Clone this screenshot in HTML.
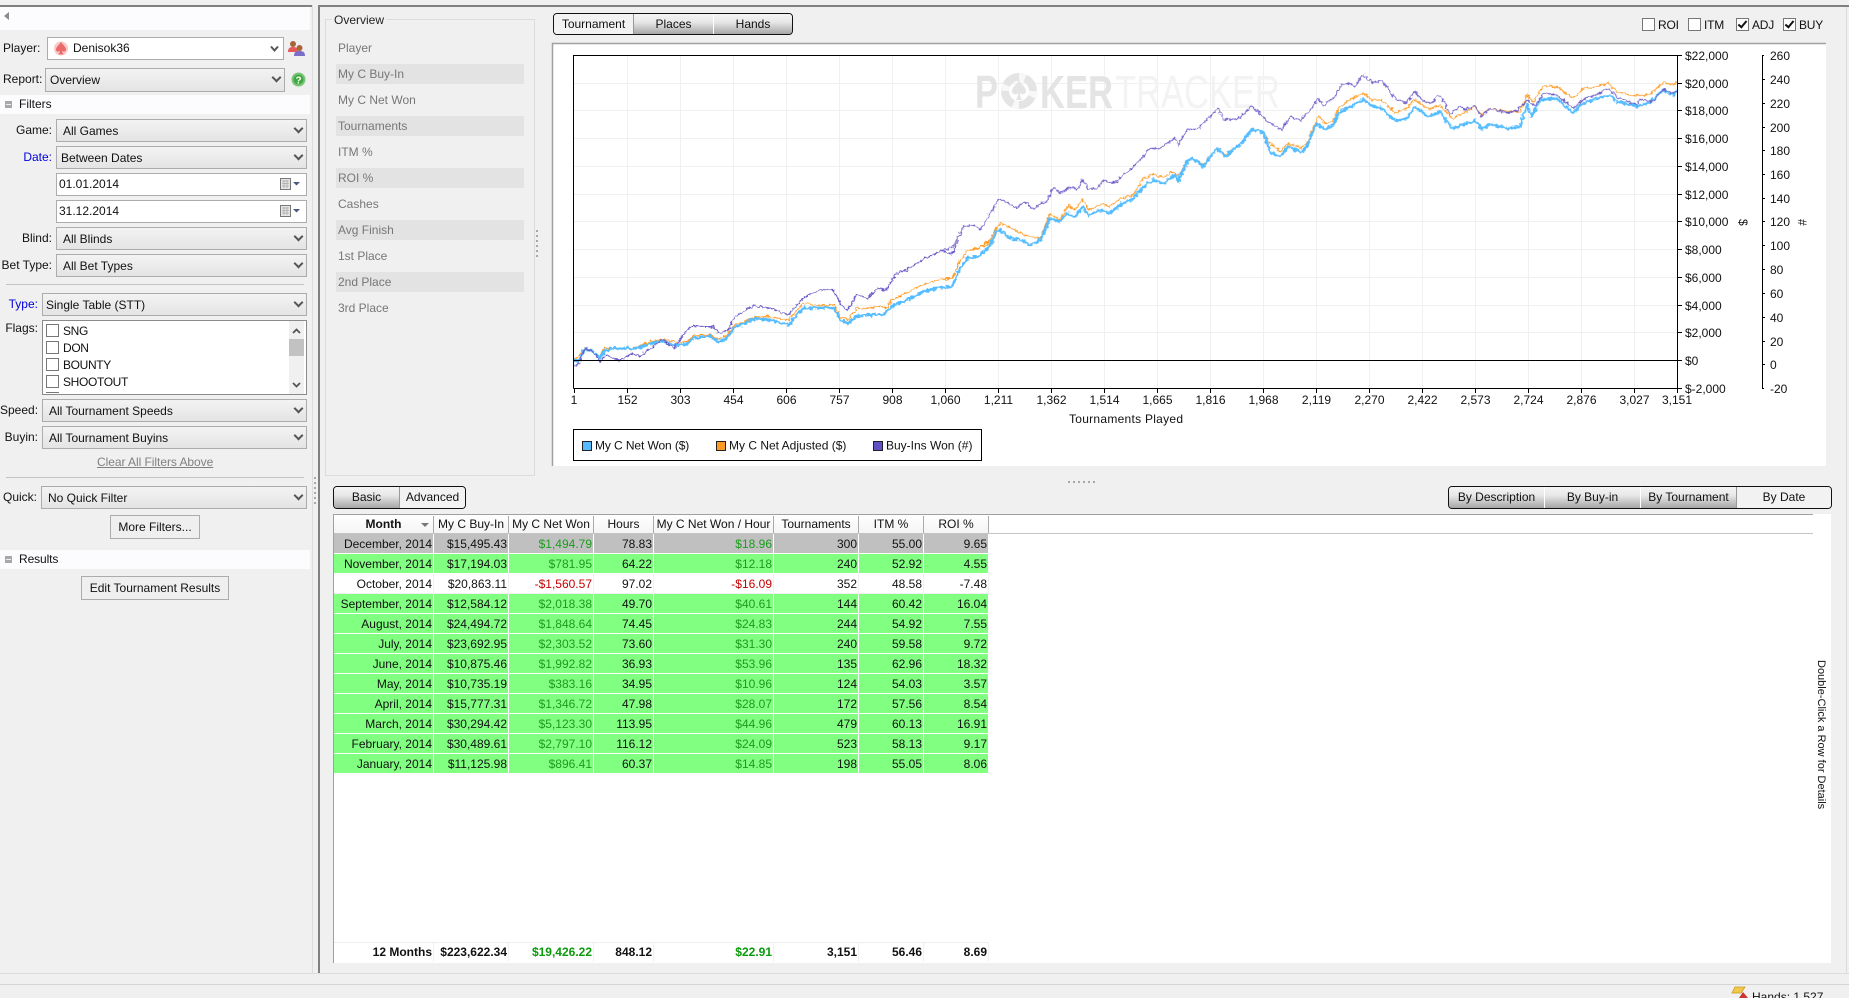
<!DOCTYPE html>
<html><head><meta charset="utf-8"><title>PokerTracker</title>
<style>
html,body{margin:0;padding:0;width:1849px;height:998px;overflow:hidden;background:#f0f0f0}
body{font:12px/16px "Liberation Sans",sans-serif;color:#111;position:relative}
.a{position:absolute;white-space:nowrap}
.l{position:absolute;text-align:right;white-space:nowrap;line-height:16px}
.c{position:absolute;left:56px;width:249px;height:21px;border:1px solid #acacac;background:linear-gradient(#f3f3f3,#e4e4e4);line-height:22px;padding-left:0;box-sizing:content-box}
.c span{margin-left:6px}
.c:after{content:"";position:absolute;right:4px;top:5px;width:5px;height:5px;border-right:2px solid #555;border-bottom:2px solid #555;transform:rotate(45deg)}
.d{position:absolute;left:56px;width:249px;height:21px;border:1px solid #acacac;background:#fff;line-height:21px}
.d span{margin-left:2px}
.b{position:absolute;border:1px solid #acacac;background:#efefef;text-align:center;box-sizing:border-box}
.band{position:absolute;left:0;width:310px;background:#fcfcfe}
.mn{position:absolute;left:5px;width:7px;height:7px;background:#a8a8a8;border:0}
.mn:after{content:"";position:absolute;left:1px;top:3px;width:5px;height:1px;background:#eee}
.cb{position:absolute;width:11px;height:11px;border:1px solid #777;background:#fff}
.ck{position:absolute;width:11px;height:11px;border:1px solid #777;background:#fff}
.ck:after{content:"";position:absolute;left:3px;top:0;width:3px;height:7px;border-right:2px solid #111;border-bottom:2px solid #111;transform:rotate(40deg)}
.ov{position:absolute;left:336px;width:188px;height:20px;line-height:20px;color:#777}
.ov span{margin-left:2px}
.ovg{background:#e3e3e3}
.tabs{position:absolute;height:22px;border:1px solid #111;border-radius:4px;box-sizing:border-box;overflow:hidden;display:flex;background:#f0f0f0}
.tabs div{text-align:center;line-height:21px;box-sizing:border-box}
.g{background:linear-gradient(#f4f4f4,#e8e8e8 40%,#a6a6a6);border-right:1px solid #fff}
.f{background:#f2f2f2;border-right:1px solid #bbb}
table{position:absolute;left:334px;border-collapse:separate;border-spacing:0;table-layout:fixed}
td{height:18px;padding:1px 1px 0 0;text-align:right;border-right:1px solid #fff;border-bottom:1px solid #fff;line-height:18px;overflow:hidden;white-space:nowrap;box-sizing:content-box}
tr.gr td{background:#80ff80}
tr.se td{background:#c0c0c0}
tr.wh td{background:#fff;border-color:#f0f0f0}
.p{color:#1c9c1c}
.n{color:#c40000}
.hd{position:absolute;top:516px;height:17px;line-height:17px;text-align:center;border-right:1px solid #aaa;box-sizing:border-box}
.sm{position:absolute;top:942px;height:20px;line-height:18px;text-align:right;font-weight:bold;padding-right:1px;box-sizing:border-box;border-right:1px solid #f0f0f0;border-top:1px solid #eee}
svg text{font-family:"Liberation Sans",sans-serif;font-size:12px;fill:#111}
.dot{position:absolute;width:2px;height:2px;background:#a8a8a8}
.fl{letter-spacing:-.35px}
</style></head><body>

<!-- frame lines -->
<div class="a" style="left:0;top:5px;width:312px;height:2px;background:#808080"></div>
<div class="a" style="left:312px;top:5px;width:1px;height:968px;background:#dcdcdc"></div>
<div class="a" style="left:318px;top:6px;width:2px;height:967px;background:#808080"></div>
<div class="a" style="left:318px;top:5px;width:1531px;height:2px;background:#808080"></div>
<div class="a" style="left:1846px;top:7px;width:1px;height:966px;background:#dcdcdc"></div>
<div class="a" style="left:0;top:973px;width:1849px;height:1px;background:#dcdcdc"></div>
<div class="a" style="left:0;top:984px;width:1849px;height:1px;background:#d4d4d4"></div>

<!-- LEFT PANEL -->
<div class="band" style="top:7px;height:23px"></div>
<svg class="a" style="left:4px;top:12px" width="6" height="9"><path d="M5 0V8L0 4Z" fill="#8a8a8a"/></svg>

<div class="l" style="left:3px;top:40px">Player:</div>
<div class="d" style="left:47px;top:37px;width:235px;height:21px"><span style="margin-left:25px">Denisok36</span></div>
<svg class="a" style="left:54px;top:41px" width="14" height="15"><circle cx="7" cy="7.5" r="7" fill="#f7c9c9"/><path d="M7 1C9 4 12 6 12 8.6 12 10.6 9.5 11.2 8 9.8 8.2 11.5 8.8 12.5 9.8 13.4H4.2C5.2 12.5 5.8 11.5 6 9.8 4.5 11.2 2 10.6 2 8.6 2 6 5 4 7 1Z" fill="#ea6a6a"/></svg>
<svg class="a" style="left:270px;top:45px" width="10" height="8"><path d="M1 1.5 4.5 5.5 8 1.5" fill="none" stroke="#555" stroke-width="2"/></svg>
<svg class="a" style="left:287px;top:40px" width="19" height="17"><circle cx="6" cy="4" r="3" fill="#a8653a"/><path d="M1 12C1 8 3 7 6 7S11 8 11 12Z" fill="#e85a5a"/><circle cx="12.5" cy="8" r="3" fill="#a8653a"/><path d="M7 16C7 12 9 11 12.5 11S18 12 18 16Z" fill="#7a70c8"/></svg>

<div class="l" style="left:3px;top:71px">Report:</div>
<div class="c" style="left:45px;top:68px;width:238px;height:22px;line-height:23px"><span style="margin-left:4px">Overview</span></div>
<svg class="a" style="left:291px;top:72px" width="15" height="15"><circle cx="7.500" cy="7.500" r="7" fill="#7bc47b"/><circle cx="7.500" cy="7.500" r="5" fill="#3fa83f"/><text x="4.500" y="11.500" style="font-size:10px;font-weight:bold;fill:#fff">?</text></svg>

<div class="band" style="top:95px;height:19px"></div>
<div class="mn" style="top:101px"></div>
<div class="a" style="left:19px;top:96px">Filters</div>

<div class="l" style="left:0;width:52px;top:122px">Game:</div>
<div class="c" style="top:119px"><span>All Games</span></div>
<div class="l" style="left:0;width:52px;top:149px;color:#0000e0">Date:</div>
<div class="c" style="top:146px"><span style="margin-left:4px">Between Dates</span></div>
<div class="d" style="top:173px"><span>01.01.2014</span></div>
<svg class="a" style="left:280px;top:178px" width="22" height="13"><rect x=".5" y=".5" width="10" height="11" fill="#e6e6e6" stroke="#777"/><path d="M2 3H9M2 5.500H9M2 8H9M4 2V10M7 2V10" stroke="#aaa" stroke-width=".8"/><path d="M13 4H20L16.500 7.500Z" fill="#4a5a80"/></svg>
<div class="d" style="top:200px"><span>31.12.2014</span></div>
<svg class="a" style="left:280px;top:205px" width="22" height="13"><rect x=".5" y=".5" width="10" height="11" fill="#e6e6e6" stroke="#777"/><path d="M2 3H9M2 5.500H9M2 8H9M4 2V10M7 2V10" stroke="#aaa" stroke-width=".8"/><path d="M13 4H20L16.500 7.500Z" fill="#4a5a80"/></svg>
<div class="l" style="left:0;width:52px;top:230px">Blind:</div>
<div class="c" style="top:227px"><span>All Blinds</span></div>
<div class="l" style="left:0;width:52px;top:257px">Bet Type:</div>
<div class="c" style="top:254px"><span>All Bet Types</span></div>
<div class="a" style="left:6px;top:284px;width:298px;height:1px;background:#c4c4c4"></div>

<div class="l" style="left:0;width:38px;top:296px;color:#0000e0">Type:</div>
<div class="c" style="left:42px;top:293px;width:263px"><span style="margin-left:3px">Single Table (STT)</span></div>
<div class="l" style="left:0;width:38px;top:320px">Flags:</div>
<div class="a" style="left:42px;top:320px;width:263px;height:73px;border:1px solid #8a8a8a;background:#fff;overflow:hidden"></div>
<div class="cb" style="left:46px;top:324px"></div><div class="a fl" style="left:63px;top:323px">SNG</div>
<div class="cb" style="left:46px;top:341px"></div><div class="a fl" style="left:63px;top:340px">DON</div>
<div class="cb" style="left:46px;top:358px"></div><div class="a fl" style="left:63px;top:357px">BOUNTY</div>
<div class="cb" style="left:46px;top:375px"></div><div class="a fl" style="left:63px;top:374px">SHOOTOUT</div>
<div class="a" style="left:46px;top:392px;width:13px;height:1px;background:#777"></div>
<div class="a" style="left:289px;top:321px;width:15px;height:73px;background:#f0f0f0"></div>
<div class="a" style="left:289px;top:339px;width:15px;height:17px;background:#c2c2c2"></div>
<svg class="a" style="left:292px;top:328px" width="9" height="6"><path d="M1 5 4.500 1.500 8 5" fill="none" stroke="#555" stroke-width="1.800"/></svg>
<svg class="a" style="left:292px;top:382px" width="9" height="6"><path d="M1 1 4.500 4.500 8 1" fill="none" stroke="#555" stroke-width="1.800"/></svg>

<div class="l" style="left:0;width:38px;top:402px">Speed:</div>
<div class="c" style="left:42px;top:399px;width:263px"><span>All Tournament Speeds</span></div>
<div class="l" style="left:0;width:38px;top:429px">Buyin:</div>
<div class="c" style="left:42px;top:426px;width:263px"><span>All Tournament Buyins</span></div>
<div class="a" style="left:97px;top:454px;color:#808080;text-decoration:underline;letter-spacing:-.05px">Clear All Filters Above</div>
<div class="a" style="left:6px;top:477px;width:298px;height:1px;background:#c4c4c4"></div>
<div class="l" style="left:0;width:37px;top:489px">Quick:</div>
<div class="c" style="left:41px;top:486px;width:264px"><span>No Quick Filter</span></div>
<div class="b" style="left:110px;top:515px;width:90px;height:24px;line-height:22px">More Filters...</div>
<div class="band" style="top:550px;height:19px"></div>
<div class="mn" style="top:556px"></div>
<div class="a" style="left:19px;top:551px;letter-spacing:-.1px">Results</div>
<div class="b" style="left:81px;top:576px;width:148px;height:24px;line-height:22px">Edit Tournament Results</div>

<!-- splitter dots -->
<div class="dot" style="left:314px;top:477px"></div><div class="dot" style="left:314px;top:482px"></div><div class="dot" style="left:314px;top:487px"></div><div class="dot" style="left:314px;top:492px"></div><div class="dot" style="left:314px;top:497px"></div><div class="dot" style="left:314px;top:502px"></div>
<div class="dot" style="left:536px;top:230px"></div><div class="dot" style="left:536px;top:235px"></div><div class="dot" style="left:536px;top:240px"></div><div class="dot" style="left:536px;top:245px"></div><div class="dot" style="left:536px;top:250px"></div><div class="dot" style="left:536px;top:255px"></div>
<div class="dot" style="left:1068px;top:481px"></div><div class="dot" style="left:1073px;top:481px"></div><div class="dot" style="left:1078px;top:481px"></div><div class="dot" style="left:1083px;top:481px"></div><div class="dot" style="left:1088px;top:481px"></div><div class="dot" style="left:1093px;top:481px"></div>

<!-- OVERVIEW -->
<div class="a" style="left:325px;top:19px;width:208px;height:455px;border:1px solid #dcdcdc"></div>
<div class="a" style="left:332px;top:12px;padding:0 2px;background:#f0f0f0;color:#222">Overview</div>
<div class="ov" style="top:38px"><span>Player</span></div>
<div class="ov ovg" style="top:64px"><span>My C Buy-In</span></div>
<div class="ov" style="top:90px"><span>My C Net Won</span></div>
<div class="ov ovg" style="top:116px"><span>Tournaments</span></div>
<div class="ov" style="top:142px"><span>ITM %</span></div>
<div class="ov ovg" style="top:168px"><span>ROI %</span></div>
<div class="ov" style="top:194px"><span>Cashes</span></div>
<div class="ov ovg" style="top:220px"><span>Avg Finish</span></div>
<div class="ov" style="top:246px"><span>1st Place</span></div>
<div class="ov ovg" style="top:272px"><span>2nd Place</span></div>
<div class="ov" style="top:298px"><span>3rd Place</span></div>

<!-- TOP TABS -->
<div class="tabs" style="left:553px;top:13px;width:240px">
<div class="f" style="width:80px;border-right:1px solid #999">Tournament</div><div class="g" style="width:80px">Places</div><div class="g" style="width:78px;border-right:0">Hands</div></div>

<!-- CHECKBOXES -->
<div class="cb" style="left:1642px;top:18px"></div><div class="a" style="left:1658px;top:17px;letter-spacing:-.2px">ROI</div>
<div class="cb" style="left:1688px;top:18px"></div><div class="a" style="left:1704px;top:17px;letter-spacing:-.2px">ITM</div>
<div class="ck" style="left:1736px;top:18px"></div><div class="a" style="left:1752px;top:17px;letter-spacing:-.2px">ADJ</div>
<div class="ck" style="left:1783px;top:18px"></div><div class="a" style="left:1799px;top:17px;letter-spacing:-.2px">BUY</div>

<!-- CHART -->
<svg class="a" style="left:0;top:0" width="1849" height="480" viewBox="0 0 1849 480">
<defs><filter id="j" filterUnits="userSpaceOnUse" x="560" y="40" width="1130" height="345" color-interpolation-filters="sRGB"><feTurbulence type="fractalNoise" baseFrequency="0.3" numOctaves="2" seed="4" result="t"/><feDisplacementMap in="SourceGraphic" in2="t" scale="5" xChannelSelector="R" yChannelSelector="G"/></filter></defs>
<rect x="552.500" y="43" width="1273.500" height="423" fill="#fff"/>
<path d="M552.500 466V43.500H1826" fill="none" stroke="#a0a0a0" stroke-width="1.500"/>
<!-- grid -->
<path d="M574 83.500H1677M574 110.500H1677M574 138.500H1677M574 166.500H1677M574 194.500H1677M574 221.500H1677M574 249.500H1677M574 277.500H1677M574 305.500H1677M574 332.500H1677" stroke="#f0f0f0" fill="none"/>
<path d="M627.500 56V388M680.500 56V388M733.500 56V388M786.500 56V388M839.500 56V388M892.500 56V388M945.500 56V388M998.500 56V388M1051.500 56V388M1104.500 56V388M1157.500 56V388M1210.500 56V388M1263.500 56V388M1316.500 56V388M1369.500 56V388M1422.500 56V388M1475.500 56V388M1528.500 56V388M1581.500 56V388M1634.500 56V388" stroke="#f0f0f0" fill="none"/>
<!-- watermark -->
<g>
<text x="975" y="108" textLength="23" lengthAdjust="spacingAndGlyphs" style="font-size:46px;font-weight:bold;fill:#e4e4e4">P</text>
<circle cx="1019" cy="91" r="14" fill="none" stroke="#e4e4e4" stroke-width="8"/>
<circle cx="1019" cy="91" r="14" fill="none" stroke="#f8f8f8" stroke-width="8" stroke-dasharray="6 16"/>
<path d="M1019 80C1021 84 1026 87 1026 91 1026 95 1021 95 1020 93 1020 96 1021 98 1022 100H1016C1017 98 1018 96 1018 93 1017 95 1012 95 1012 91 1012 87 1017 84 1019 80Z" fill="#e4e4e4"/>
<text x="1040" y="108" textLength="73" lengthAdjust="spacingAndGlyphs" style="font-size:46px;font-weight:bold;fill:#e4e4e4">KER</text>
<text x="1115" y="108" textLength="165" lengthAdjust="spacingAndGlyphs" style="font-size:46px;fill:#f3f3f3">TRACKER</text>
</g>
<!-- series -->
<g filter="url(#j)" fill="none" stroke-linejoin="round">
<g stroke="#ff9a22" stroke-width="1.200">
<g transform="translate(550,240) scale(.41459,.33333)"><polyline vector-effect="non-scaling-stroke" points="60,362 85,322 120,350 130,325 210,322 240,305 270,298 300,305 330,305 345,287 385,283 405,298 425,288 445,255 470,243 495,230 530,230 575,240 610,190 660,197 685,195 700,230 718,238 740,205 765,205 790,198 810,205 825,180 860,158 900,133 940,118 970,115 990,60 1005,35 1035,25 1060,0"/></g>
<g transform="translate(800,50) scale(.33333)"><polyline vector-effect="non-scaling-stroke" points="520,597 560,585 600,520 630,530 660,550 690,560 720,565 750,492 780,510 805,465 825,480 848,447 865,480 905,462 930,470 960,445 1000,435 1030,385 1060,372 1090,385 1115,365 1135,378 1160,335 1180,325 1210,345 1250,295 1280,315 1300,295 1320,285 1355,240 1390,245 1405,275 1440,305 1465,280 1500,292"/></g>
<g transform="translate(1300,50) scale(.33333)"><polyline vector-effect="non-scaling-stroke" points="0,295 20,280 55,198 75,222 100,210 115,175 150,150 190,128 215,150 245,150 285,188 320,175 345,148 385,178 420,165 455,205 495,188 525,168 545,195 570,175 625,185 660,185 682,132 700,155 730,108 770,110 820,145 850,115 885,112 925,100 950,125 1010,138 1050,132 1090,97 1120,105 1130,98"/></g>
</g>
<g stroke="#55bdff" stroke-width="2.600">
<g transform="translate(550,240) scale(.41459,.33333)"><polyline vector-effect="non-scaling-stroke" points="57,360 70,362 85,325 105,335 120,355 130,335 150,325 210,325 240,312 270,303 300,315 330,312 345,295 385,288 405,305 425,298 445,262 470,250 495,235 530,240 575,255 610,205 660,203 685,205 700,240 718,250 740,228 765,225 805,222 830,195 860,180 900,155 940,143 970,140 990,85 1005,55 1035,48 1060,20 1070,0"/></g>
<g transform="translate(800,50) scale(.33333)"><polyline vector-effect="non-scaling-stroke" points="560,600 590,545 600,540 630,565 660,568 690,585 720,572 750,505 780,515 800,490 825,500 848,470 865,495 905,480 930,490 960,465 1000,445 1030,410 1060,390 1090,400 1125,375 1135,395 1160,335 1180,325 1210,350 1250,295 1280,320 1300,295 1320,285 1355,240 1390,245 1410,305 1440,320 1465,290 1500,305"/></g>
<g transform="translate(1300,50) scale(.33333)"><polyline vector-effect="non-scaling-stroke" points="0,310 20,290 50,220 75,238 100,225 115,190 150,170 190,148 215,168 245,175 285,212 320,205 345,170 385,200 420,185 455,235 495,222 525,212 545,237 570,222 625,235 660,230 680,165 695,200 720,150 770,145 820,190 840,165 880,148 930,135 950,155 1010,168 1050,158 1090,120 1120,135 1130,120"/></g>
</g>
<g stroke="#6a5cc8" stroke-width="1.200">
<g transform="translate(550,240) scale(.41459,.33333)"><polyline vector-effect="non-scaling-stroke" points="57,375 65,380 85,325 105,335 120,365 135,345 165,362 200,340 215,350 270,300 300,325 315,295 340,258 395,260 405,280 430,272 445,230 490,198 535,205 575,225 610,175 650,150 685,150 700,190 718,212 740,162 765,175 790,145 810,150 835,100 860,90 900,58 945,32 970,42 985,0"/></g>
<g transform="translate(800,50) scale(.33333)"><polyline vector-effect="non-scaling-stroke" points="430,600 460,590 490,530 520,525 540,540 598,447 650,472 675,455 695,475 740,455 760,412 780,430 815,410 830,420 850,388 865,415 890,418 910,392 945,400 970,372 985,365 1030,320 1050,295 1080,295 1125,265 1135,285 1160,240 1195,235 1225,205 1255,175 1270,210 1305,205 1310,210 1355,168 1400,212 1445,240 1470,200 1500,210"/></g>
<g transform="translate(1300,50) scale(.33333)"><polyline vector-effect="non-scaling-stroke" points="0,212 35,175 55,145 70,168 105,140 125,105 150,100 165,108 190,75 215,98 245,92 285,145 320,160 345,122 370,155 395,160 415,135 430,150 450,195 480,168 495,180 525,168 545,200 570,175 625,190 650,182 682,150 705,168 730,130 770,135 820,175 855,145 885,135 925,115 950,140 1010,165 1020,148 1060,155 1090,118 1120,130 1130,122"/></g>
</g>
</g>
<!-- axes -->
<path d="M573.500 388.500V55.500H1677.500V388.500H573.500M573.500 360.500H1677.500" fill="none" stroke="#000"/>
<path d="M1678 55.500H1682M1678 83.500H1682M1678 110.500H1682M1678 138.500H1682M1678 166.500H1682M1678 194.500H1682M1678 221.500H1682M1678 249.500H1682M1678 277.500H1682M1678 305.500H1682M1678 332.500H1682M1678 360.500H1682M1678 388.500H1682" stroke="#000" fill="none"/>
<path d="M1764 55.500H1762.500V388.500H1764M1762.500 79.500H1765M1762.500 103.500H1765M1762.500 127.500H1765M1762.500 150.500H1765M1762.500 174.500H1765M1762.500 198.500H1765M1762.500 221.500H1765M1762.500 245.500H1765M1762.500 269.500H1765M1762.500 293.500H1765M1762.500 317.500H1765M1762.500 341.500H1765M1762.500 364.500H1765" stroke="#000" fill="none"/>
<path d="M574.500 388V393M627.500 388V393M680.500 388V393M733.500 388V393M786.500 388V393M839.500 388V393M892.500 388V393M945.500 388V393M998.500 388V393M1051.500 388V393M1104.500 388V393M1157.500 388V393M1210.500 388V393M1263.500 388V393M1316.500 388V393M1369.500 388V393M1422.500 388V393M1475.500 388V393M1528.500 388V393M1581.500 388V393M1634.500 388V393M1677.500 388V393" stroke="#000" fill="none"/>
<g>
<text x="1685" y="60">$22,000</text><text x="1685" y="88">$20,000</text><text x="1685" y="115">$18,000</text><text x="1685" y="143">$16,000</text><text x="1685" y="171">$14,000</text><text x="1685" y="199">$12,000</text><text x="1685" y="226">$10,000</text><text x="1685" y="254">$8,000</text><text x="1685" y="282">$6,000</text><text x="1685" y="310">$4,000</text><text x="1685" y="337">$2,000</text><text x="1685" y="365">$0</text><text x="1685" y="393">$-2,000</text>
<text x="1770" y="60">260</text><text x="1770" y="84">240</text><text x="1770" y="108">220</text><text x="1770" y="132">200</text><text x="1770" y="155">180</text><text x="1770" y="179">160</text><text x="1770" y="203">140</text><text x="1770" y="226">120</text><text x="1770" y="250">100</text><text x="1770" y="274">80</text><text x="1770" y="298">60</text><text x="1770" y="322">40</text><text x="1770" y="346">20</text><text x="1770" y="369">0</text><text x="1770" y="393">-20</text>
<text transform="translate(1739,222) rotate(90)" x="-3">$</text>
<text transform="translate(1798,222) rotate(90)" x="-3">#</text>
</g>
<g text-anchor="middle">
<text x="574" y="404">1</text><text x="627.500" y="404">152</text><text x="680.500" y="404">303</text><text x="733.500" y="404">454</text><text x="786.500" y="404">606</text><text x="839.500" y="404">757</text><text x="892.500" y="404">908</text><text x="945.500" y="404">1,060</text><text x="998.500" y="404">1,211</text><text x="1051.500" y="404">1,362</text><text x="1104.500" y="404">1,514</text><text x="1157.500" y="404">1,665</text><text x="1210.500" y="404">1,816</text><text x="1263.500" y="404">1,968</text><text x="1316.500" y="404">2,119</text><text x="1369.500" y="404">2,270</text><text x="1422.500" y="404">2,422</text><text x="1475.500" y="404">2,573</text><text x="1528.500" y="404">2,724</text><text x="1581.500" y="404">2,876</text><text x="1634.500" y="404">3,027</text><text x="1677" y="404">3,151</text>
<text x="1126" y="423" textLength="114" lengthAdjust="spacing">Tournaments Played</text>
</g>
<!-- legend -->
<rect x="573.500" y="429.500" width="408" height="31" fill="#fff" stroke="#000"/>
<rect x="582.500" y="441.500" width="9" height="9" fill="#55bdff" stroke="#222"/><text x="595" y="449.500" style="letter-spacing:-.1px">My C Net Won ($)</text>
<rect x="716.500" y="441.500" width="9" height="9" fill="#ff9a22" stroke="#222"/><text x="729" y="449.500">My C Net Adjusted ($)</text>
<rect x="873.500" y="441.500" width="9" height="9" fill="#5f52c4" stroke="#222"/><text x="886" y="449.500">Buy-Ins Won (#)</text>
</svg>

<!-- LOWER TABS -->
<div class="tabs" style="left:333px;top:486px;width:133px;height:23px">
<div class="g" style="width:66px;border-right:1px solid #999">Basic</div><div class="f" style="width:65px;border-right:0">Advanced</div></div>
<div class="tabs" style="left:1448px;top:486px;width:384px;height:23px">
<div class="g" style="width:96px">By Description</div><div class="g" style="width:96px">By Buy-in</div><div class="g" style="width:96px;border-right:1px solid #999">By Tournament</div><div class="f" style="width:94px;border-right:0">By Date</div></div>

<!-- TABLE PANEL -->
<div class="a" style="left:333px;top:514px;width:1498px;height:449px;background:#fff"></div>
<div class="a" style="left:333px;top:514px;width:1480px;height:1px;background:#a0a0a0"></div>
<div class="a" style="left:333px;top:514px;width:1px;height:449px;background:#a0a0a0"></div>
<div class="a" style="left:334px;top:533px;width:1479px;height:1px;background:#c4c4c4"></div>
<div class="a" style="left:334px;top:515px;width:655px;height:18px;background:linear-gradient(#fff,#f4f4f4)"></div>
<div class="hd" style="left:334px;width:100px;font-weight:bold">Month</div>
<svg class="a" style="left:421px;top:523px" width="9" height="5"><path d="M0 0H8L4 4Z" fill="#777"/></svg>
<div class="hd" style="left:434px;width:75px">My C Buy-In</div>
<div class="hd" style="left:509px;width:85px">My C Net Won</div>
<div class="hd" style="left:594px;width:60px">Hours</div>
<div class="hd" style="left:654px;width:120px">My C Net Won / Hour</div>
<div class="hd" style="left:774px;width:85px">Tournaments</div>
<div class="hd" style="left:859px;width:65px">ITM %</div>
<div class="hd" style="left:924px;width:65px">ROI %</div>

<table style="top:534px;width:655px">
<colgroup><col style="width:100px"><col style="width:75px"><col style="width:85px"><col style="width:60px"><col style="width:120px"><col style="width:85px"><col style="width:65px"><col style="width:65px"></colgroup>
<tr class="se"><td>December, 2014</td><td>$15,495.43</td><td class="p">$1,494.79</td><td>78.83</td><td class="p">$18.96</td><td>300</td><td>55.00</td><td>9.65</td></tr>
<tr class="gr"><td>November, 2014</td><td>$17,194.03</td><td class="p">$781.95</td><td>64.22</td><td class="p">$12.18</td><td>240</td><td>52.92</td><td>4.55</td></tr>
<tr class="wh"><td>October, 2014</td><td>$20,863.11</td><td class="n">-$1,560.57</td><td>97.02</td><td class="n">-$16.09</td><td>352</td><td>48.58</td><td>-7.48</td></tr>
<tr class="gr"><td>September, 2014</td><td>$12,584.12</td><td class="p">$2,018.38</td><td>49.70</td><td class="p">$40.61</td><td>144</td><td>60.42</td><td>16.04</td></tr>
<tr class="gr"><td>August, 2014</td><td>$24,494.72</td><td class="p">$1,848.64</td><td>74.45</td><td class="p">$24.83</td><td>244</td><td>54.92</td><td>7.55</td></tr>
<tr class="gr"><td>July, 2014</td><td>$23,692.95</td><td class="p">$2,303.52</td><td>73.60</td><td class="p">$31.30</td><td>240</td><td>59.58</td><td>9.72</td></tr>
<tr class="gr"><td>June, 2014</td><td>$10,875.46</td><td class="p">$1,992.82</td><td>36.93</td><td class="p">$53.96</td><td>135</td><td>62.96</td><td>18.32</td></tr>
<tr class="gr"><td>May, 2014</td><td>$10,735.19</td><td class="p">$383.16</td><td>34.95</td><td class="p">$10.96</td><td>124</td><td>54.03</td><td>3.57</td></tr>
<tr class="gr"><td>April, 2014</td><td>$15,777.31</td><td class="p">$1,346.72</td><td>47.98</td><td class="p">$28.07</td><td>172</td><td>57.56</td><td>8.54</td></tr>
<tr class="gr"><td>March, 2014</td><td>$30,294.42</td><td class="p">$5,123.30</td><td>113.95</td><td class="p">$44.96</td><td>479</td><td>60.13</td><td>16.91</td></tr>
<tr class="gr"><td>February, 2014</td><td>$30,489.61</td><td class="p">$2,797.10</td><td>116.12</td><td class="p">$24.09</td><td>523</td><td>58.13</td><td>9.17</td></tr>
<tr class="gr"><td>January, 2014</td><td>$11,125.98</td><td class="p">$896.41</td><td>60.37</td><td class="p">$14.85</td><td>198</td><td>55.05</td><td>8.06</td></tr>
</table>

<div class="sm" style="left:334px;width:100px">12 Months</div>
<div class="sm" style="left:434px;width:75px">$223,622.34</div>
<div class="sm" style="left:509px;width:85px;color:#0a9a0a">$19,426.22</div>
<div class="sm" style="left:594px;width:60px">848.12</div>
<div class="sm" style="left:654px;width:120px;color:#0a9a0a">$22.91</div>
<div class="sm" style="left:774px;width:85px">3,151</div>
<div class="sm" style="left:859px;width:65px">56.46</div>
<div class="sm" style="left:924px;width:65px">8.69</div>

<div class="a" style="left:1813px;top:660px;writing-mode:vertical-rl;font-size:11px">Double-Click a Row for Details</div>

<!-- STATUS -->
<svg class="a" style="left:1731px;top:986px" width="18" height="12"><path d="M4 1H14L10 7H1Z" fill="#f0c84a" stroke="#c89a20" stroke-width=".8"/><path d="M8 12 12 6 17 12Z" fill="#cc3333"/></svg>
<div class="a" style="left:1752px;top:989px">Hands: 1,527</div>
</body></html>
